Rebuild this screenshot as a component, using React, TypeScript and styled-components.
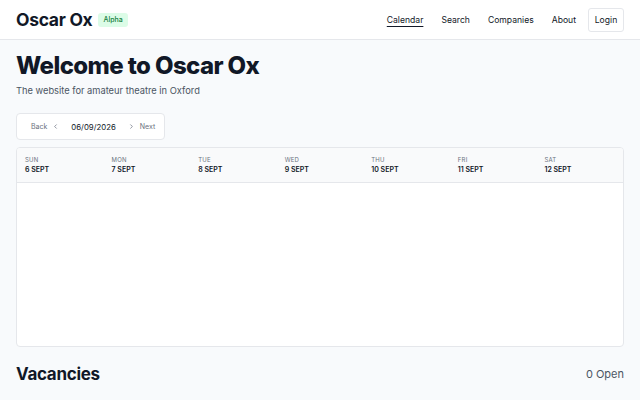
import React from "react";
import styled, { createGlobalStyle } from "styled-components";

const Global = createGlobalStyle`
  html, body { margin: 0; padding: 0; }
  body {
    background: #f8fafc;
    font-family: Inter, "Noto Sans", sans-serif;
    color: #111827;
    -webkit-font-smoothing: antialiased;
  }
`;

const Header = styled.header`
  height: 40px;
  background: #ffffff;
  border-bottom: 1px solid #e5e7eb;
  display: flex;
  align-items: center;
  justify-content: space-between;
  padding: 0 16px;
  box-sizing: border-box;
`;

const Brand = styled.div`
  display: flex;
  align-items: center;
  gap: 6px;
`;

const Logo = styled.div`
  font-size: 17.5px;
  font-weight: 700;
  letter-spacing: -0.3px;
  color: #111827;
`;

const Badge = styled.span`
  background: #dcfce7;
  color: #15803d;
  font-size: 7px;
  line-height: 8px;
  font-weight: 500;
  padding: 3px 5px;
  border-radius: 3px;
`;

const Nav = styled.nav`
  display: flex;
  align-items: center;
  gap: 18px;
`;

const NavLink = styled.a<{ $active?: boolean }>`
  font-size: 8.6px;
  color: #111827;
  text-decoration: ${(p) => (p.$active ? "underline" : "none")};
  text-underline-offset: 3px;
  cursor: pointer;
`;

const LoginButton = styled.button`
  font-family: inherit;
  font-size: 8.6px;
  color: #111827;
  background: #ffffff;
  border: 1px solid #e5e7eb;
  border-radius: 3px;
  height: 24px;
  width: 36px;
  padding: 0;
  margin-left: -6px;
`;

const Main = styled.main`
  padding: 12px 16px 0;
`;

const Title = styled.h1`
  margin: 0;
  font-size: 24px;
  font-weight: 800;
  letter-spacing: -0.6px;
  line-height: 28px;
  color: #111827;
`;

const Subtitle = styled.p`
  margin: 5px 0 0;
  font-size: 9.3px;
  color: #4b5563;
`;

const DateNav = styled.div`
  margin-top: 17px;
  display: inline-flex;
  align-items: center;
  height: 25px;
  padding: 0 9px 0 14px;
  background: #ffffff;
  border: 1px solid #e5e7eb;
  border-radius: 4px;
`;

const NavText = styled.span`
  font-size: 7px;
  color: #6b7280;
`;

const Chevron = styled.svg`
  width: 7px;
  height: 7px;
  margin: 0 5px;
  color: #6b7280;
`;

const DateText = styled.span`
  font-size: 7.8px;
  color: #111827;
  margin: 0 7px;
`;

const Card = styled.div`
  margin-top: 7px;
  height: 200px;
  background: #ffffff;
  border: 1px solid #e5e7eb;
  border-radius: 4px;
  box-sizing: border-box;
  overflow: hidden;
`;

const DaysRow = styled.div`
  display: grid;
  grid-template-columns: repeat(7, 1fr);
  height: 35px;
  background: #f9fafb;
  border-bottom: 1px solid #e5e7eb;
  box-sizing: border-box;
`;

const DayCell = styled.div`
  padding: 8px 8px 0;
  display: flex;
  flex-direction: column;
  gap: 2px;
`;

const DayName = styled.span`
  font-size: 6px;
  color: #6b7280;
  letter-spacing: 0.2px;
`;

const DayDate = styled.span`
  font-size: 7px;
  font-weight: 600;
  color: #111827;
`;

const SectionRow = styled.div`
  display: flex;
  align-items: center;
  justify-content: space-between;
  margin-top: 17px;
`;

const SectionTitle = styled.h2`
  margin: 0;
  font-size: 17px;
  font-weight: 700;
  color: #111827;
  letter-spacing: -0.3px;
`;

const Count = styled.span`
  font-size: 11px;
  color: #4b5563;
`;

const ChevronLeft = () => (
  <Chevron viewBox="0 0 24 24" fill="none" stroke="currentColor" strokeWidth={2.5} strokeLinecap="round" strokeLinejoin="round">
    <path d="M15 18l-6-6 6-6" />
  </Chevron>
);

const ChevronRight = () => (
  <Chevron viewBox="0 0 24 24" fill="none" stroke="currentColor" strokeWidth={2.5} strokeLinecap="round" strokeLinejoin="round">
    <path d="M9 18l6-6-6-6" />
  </Chevron>
);

const days = [
  ["SUN", "6 SEPT"],
  ["MON", "7 SEPT"],
  ["TUE", "8 SEPT"],
  ["WED", "9 SEPT"],
  ["THU", "10 SEPT"],
  ["FRI", "11 SEPT"],
  ["SAT", "12 SEPT"],
];

export default function App() {
  return (
    <>
      <Global />
      <Header>
        <Brand>
          <Logo>Oscar Ox</Logo>
          <Badge>Alpha</Badge>
        </Brand>
        <Nav>
          <NavLink $active>Calendar</NavLink>
          <NavLink>Search</NavLink>
          <NavLink>Companies</NavLink>
          <NavLink>About</NavLink>
          <LoginButton>Login</LoginButton>
        </Nav>
      </Header>
      <Main>
        <Title>Welcome to Oscar Ox</Title>
        <Subtitle>The website for amateur theatre in Oxford</Subtitle>
        <DateNav>
          <NavText>Back</NavText>
          <ChevronLeft />
          <DateText>06/09/2026</DateText>
          <ChevronRight />
          <NavText>Next</NavText>
        </DateNav>
        <Card>
          <DaysRow>
            {days.map(([n, d]) => (
              <DayCell key={n}>
                <DayName>{n}</DayName>
                <DayDate>{d}</DayDate>
              </DayCell>
            ))}
          </DaysRow>
        </Card>
        <SectionRow>
          <SectionTitle>Vacancies</SectionTitle>
          <Count>0 Open</Count>
        </SectionRow>
      </Main>
    </>
  );
}
